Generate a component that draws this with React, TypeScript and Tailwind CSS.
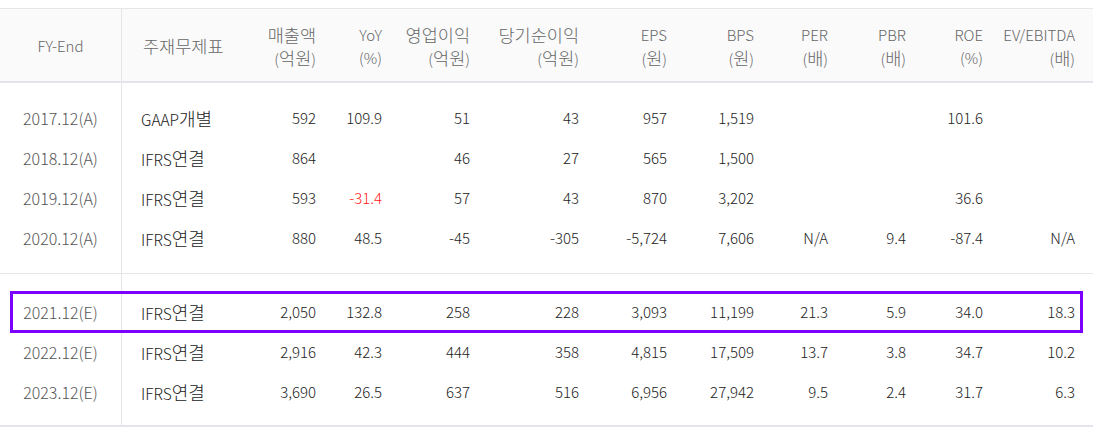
import React from 'react';

type Row = {
    fy: string;
    kind: string;
    vals: string[];
    redIdx?: number;
};

const headers: [string, string][] = [
    ['매출액', '(억원)'],
    ['YoY', '(%)'],
    ['영업이익', '(억원)'],
    ['당기순이익', '(억원)'],
    ['EPS', '(원)'],
    ['BPS', '(원)'],
    ['PER', '(배)'],
    ['PBR', '(배)'],
    ['ROE', '(%)'],
    ['EV/EBITDA', '(배)'],
];

const actual: Row[] = [
    { fy: '2017.12(A)', kind: 'GAAP개별', vals: ['592', '109.9', '51', '43', '957', '1,519', '', '', '101.6', ''] },
    { fy: '2018.12(A)', kind: 'IFRS연결', vals: ['864', '', '46', '27', '565', '1,500', '', '', '', ''] },
    { fy: '2019.12(A)', kind: 'IFRS연결', vals: ['593', '-31.4', '57', '43', '870', '3,202', '', '', '36.6', ''], redIdx: 1 },
    { fy: '2020.12(A)', kind: 'IFRS연결', vals: ['880', '48.5', '-45', '-305', '-5,724', '7,606', 'N/A', '9.4', '-87.4', 'N/A'] },
];

const estimate: Row[] = [
    { fy: '2021.12(E)', kind: 'IFRS연결', vals: ['2,050', '132.8', '258', '228', '3,093', '11,199', '21.3', '5.9', '34.0', '18.3'] },
    { fy: '2022.12(E)', kind: 'IFRS연결', vals: ['2,916', '42.3', '444', '358', '4,815', '17,509', '13.7', '3.8', '34.7', '10.2'] },
    { fy: '2023.12(E)', kind: 'IFRS연결', vals: ['3,690', '26.5', '637', '516', '6,956', '27,942', '9.5', '2.4', '31.7', '6.3'] },
];

const cols = 'grid grid-cols-[128px_66px_66px_88px_109px_88px_87px_74px_78px_77px_92px]';

// hangul is drawn wider in the reference font, so bump it up a bit
function K({ text, big }: { text: string; big?: boolean }) {
    const parts = text.split(/([가-힣]+)/);
    return (
        <>
            {parts.map((p, i) =>
                /[가-힣]/.test(p) ? (
                    <span key={i} className={big ? 'text-[18px]' : 'text-[17.5px]'}>{p}</span>
                ) : (
                    <span key={i}>{p}</span>
                )
            )}
        </>
    );
}

function Section({ rows, pad, className, highlight }: { rows: Row[]; pad: string; className: string; highlight?: boolean }) {
    return (
        <div className={`relative flex ${className}`}>
            <div className={`w-[122px] flex-none border-r border-[#e6e6e6] ${pad}`}>
                {rows.map((r) => (
                    <div key={r.fy} className="h-10 flex items-center justify-center text-[#555] text-[16px]">
                        {r.fy}
                    </div>
                ))}
            </div>
            <div className={`flex-1 ${pad}`}>
                {rows.map((r) => (
                    <div key={r.fy} className={`${cols} h-10 items-center text-[#222]`}>
                        <div className="pl-[19px] leading-5 text-[15.5px]">
                            <K text={r.kind} big />
                        </div>
                        {r.vals.map((v, i) => (
                            <div key={i} className={`text-right ${r.redIdx === i ? 'text-[#ff2020]' : ''}`}>
                                {v}
                            </div>
                        ))}
                    </div>
                ))}
            </div>
            {highlight && (
                <div className="absolute left-[10px] right-[10px] top-[17px] h-[42px] border-[3px] border-[#7d00ff] pointer-events-none" />
            )}
        </div>
    );
}

export default function App() {
    return (
        <div className="w-[1093px] h-[430px] bg-white pt-2 text-[15px] font-light font-['Noto_Sans_CJK_KR','Noto_Sans',sans-serif] overflow-hidden">
            <div className="border-t border-[#e6e6e6]">
                {/* header */}
                <div className="flex h-[74px] bg-[#fafafa] border-b-2 border-[#e4e4ec] text-[#666]">
                    <div className="w-[122px] flex-none border-r border-[#e6e6e6] flex items-center justify-center pt-[2px]">
                        FY-End
                    </div>
                    <div className={`${cols} flex-1 items-center`}>
                        <div className="pl-[21px] pt-[2px] leading-5">
                            <K text="주재무제표" />
                        </div>
                        {headers.map(([a, b]) => (
                            <div key={a} className="flex flex-col items-end leading-[23px] pt-[2px]">
                                <span className="h-[23px]"><K text={a} /></span>
                                <span className="h-[23px]"><K text={b} /></span>
                            </div>
                        ))}
                    </div>
                </div>

                <Section rows={actual} pad="py-[15px]" className="border-b border-[#e6e6e6]" />
                <Section rows={estimate} pad="pt-[18px] pb-[13px]" className="border-b-2 border-[#e4e4ec]" highlight />
            </div>
        </div>
    );
}
